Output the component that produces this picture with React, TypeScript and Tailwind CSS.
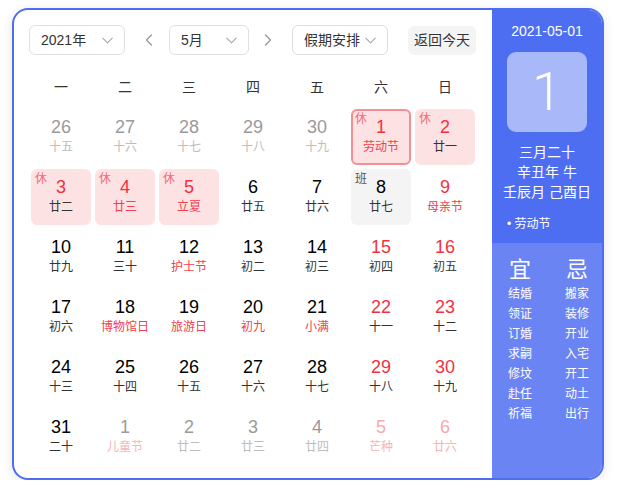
import React from 'react';
import { ChevronDown, ChevronLeft, ChevronRight } from 'lucide-react';

type Day = {
  n: number;
  lunar: string;
  other?: boolean;
  red?: boolean; // number in red
  lunarRed?: boolean;
  tag?: '休' | '班';
  selected?: boolean;
};

const days: Day[] = [
  { n: 26, lunar: '十五', other: true },
  { n: 27, lunar: '十六', other: true },
  { n: 28, lunar: '十七', other: true },
  { n: 29, lunar: '十八', other: true },
  { n: 30, lunar: '十九', other: true },
  { n: 1, lunar: '劳动节', red: true, lunarRed: true, tag: '休', selected: true },
  { n: 2, lunar: '廿一', red: true, tag: '休' },
  { n: 3, lunar: '廿二', red: true, tag: '休' },
  { n: 4, lunar: '廿三', red: true, lunarRed: true, tag: '休' },
  { n: 5, lunar: '立夏', red: true, lunarRed: true, tag: '休' },
  { n: 6, lunar: '廿五' },
  { n: 7, lunar: '廿六' },
  { n: 8, lunar: '廿七', tag: '班' },
  { n: 9, lunar: '母亲节', red: true, lunarRed: true },
  { n: 10, lunar: '廿九' },
  { n: 11, lunar: '三十' },
  { n: 12, lunar: '护士节', lunarRed: true },
  { n: 13, lunar: '初二' },
  { n: 14, lunar: '初三' },
  { n: 15, lunar: '初四', red: true },
  { n: 16, lunar: '初五', red: true },
  { n: 17, lunar: '初六' },
  { n: 18, lunar: '博物馆日', lunarRed: true },
  { n: 19, lunar: '旅游日', lunarRed: true },
  { n: 20, lunar: '初九', lunarRed: true },
  { n: 21, lunar: '小满', lunarRed: true },
  { n: 22, lunar: '十一', red: true },
  { n: 23, lunar: '十二', red: true },
  { n: 24, lunar: '十三' },
  { n: 25, lunar: '十四' },
  { n: 26, lunar: '十五' },
  { n: 27, lunar: '十六' },
  { n: 28, lunar: '十七' },
  { n: 29, lunar: '十八', red: true },
  { n: 30, lunar: '十九', red: true },
  { n: 31, lunar: '二十' },
  { n: 1, lunar: '儿童节', other: true, lunarRed: true },
  { n: 2, lunar: '廿二', other: true },
  { n: 3, lunar: '廿三', other: true },
  { n: 4, lunar: '廿四', other: true },
  { n: 5, lunar: '芒种', other: true, red: true, lunarRed: true },
  { n: 6, lunar: '廿六', other: true, red: true, lunarRed: true },
];

const weekdays = ['一', '二', '三', '四', '五', '六', '日'];
const yi = ['结婚', '领证', '订婚', '求嗣', '修坟', '赴任', '祈福'];
const ji = ['搬家', '装修', '开业', '入宅', '开工', '动土', '出行'];

const Select: React.FC<{ label: string; width: string }> = ({ label, width }) => (
  <div
    className={`${width} h-[30px] flex items-center justify-between pl-[11px] pr-[7px] border border-[#dcdfe6] rounded-[6px] text-[14px] text-[#333] whitespace-nowrap`}
  >
    <span>{label}</span>
    <ChevronDown className="shrink-0 w-[19px] h-[19px] text-[#a8abb2]" strokeWidth={1.5} />
  </div>
);

const DayCell: React.FC<{ d: Day }> = ({ d }) => {
  let bg = '';
  if (d.tag === '休') bg = 'bg-[#fde2e4]';
  if (d.tag === '班') bg = 'bg-[#f4f4f4]';
  const border = d.selected ? 'border-2 border-[#f29096]' : '';

  let numColor = d.red ? 'text-[#f5303e]' : 'text-black';
  let lunarColor = d.lunarRed ? 'text-[#f2404c]' : 'text-[#333]';
  if (d.other) {
    numColor = d.red ? 'text-[#f8a9ae]' : 'text-[#9a9a9a]';
    lunarColor = d.lunarRed ? 'text-[#f8b4b8]' : 'text-[#bdbdbd]';
  }

  return (
    <div className={`relative h-[56px] rounded-[6px] flex flex-col items-center ${bg} ${border} ${d.selected ? 'pt-[6px]' : 'pt-[8px]'}`}>
      {d.tag && (
        <span
          className={`absolute ${d.selected ? 'left-[2px] top-[1px]' : 'left-[4px] top-[3px]'} text-[12px] leading-[14px] ${
            d.tag === '休' ? 'text-[#f36b73]' : 'text-[#555]'
          }`}
        >
          {d.tag}
        </span>
      )}
      <span className={`text-[18px] leading-[21px] ${numColor}`}>{d.n}</span>
      <span className={`text-[12px] leading-[18px] ${lunarColor}`}>{d.lunar}</span>
    </div>
  );
};

export default function App() {
  return (
    <div
      className="pt-[8px] pl-[12px]"
      style={{ fontFamily: '"Liberation Sans", "Noto Sans CJK SC", sans-serif' }}
    >
      <div className="w-[592px] h-[472px] flex border-2 border-[#4e6ef2] rounded-[16px] overflow-hidden bg-white shadow-[0_2px_12px_rgba(0,0,0,0.1)]">
        {/* Calendar */}
        <div className="flex-1 pt-[15px] pl-[15px]">
          <div className="flex items-center">
            <Select label="2021年" width="w-[96px]" />
            <ChevronLeft className="shrink-0 ml-[14px] w-[20px] h-[20px] text-[#999]" strokeWidth={1.6} />
            <div className="ml-[10px]">
              <Select label="5月" width="w-[80px]" />
            </div>
            <ChevronRight className="shrink-0 ml-[9px] w-[20px] h-[20px] text-[#999]" strokeWidth={1.6} />
            <div className="ml-[14px]">
              <Select label="假期安排" width="w-[96px]" />
            </div>
            <div className="shrink-0 ml-[20px] w-[68px] h-[29px] flex items-center justify-center rounded-[6px] bg-[#f4f4f5] text-[14px] text-[#333] whitespace-nowrap">
              返回今天
            </div>
          </div>

          <div className="ml-[2px] w-[444px] mt-[17px] h-[30px] grid grid-cols-7 gap-x-1 items-center text-center text-[14px] text-[#333]">
            {weekdays.map((w) => (
              <span key={w}>{w}</span>
            ))}
          </div>

          <div className="ml-[2px] w-[444px] mt-[7px] grid grid-cols-7 gap-1">
            {days.map((d, i) => (
              <DayCell key={i} d={d} />
            ))}
          </div>
        </div>

        {/* Side panel */}
        <div className="w-[110px] flex flex-col text-white">
          <div className="bg-[#4e6ef2] h-[233px] flex flex-col items-center pt-[11px]">
            <div className="text-[14px] leading-[20px]">2021-05-01</div>
            <div
              className="mt-[11px] w-[80px] h-[80px] rounded-[9px] bg-[#a9b8f8] flex items-center justify-center text-[54px] font-light leading-none"
              style={{ fontFamily: 'Roboto, "Liberation Sans", sans-serif' }}
            >
              1
            </div>
            <div className="mt-[10px] text-[14px] leading-[20px] text-center">
              <div>三月二十</div>
              <div>辛丑年 牛</div>
              <div>壬辰月 己酉日</div>
            </div>
            <div className="self-start ml-[15px] mt-[14px] text-[12px] leading-[16px]">• 劳动节</div>
          </div>
          <div className="flex-1 bg-[#6a84f4] pt-[13px] pl-[16px] flex gap-[33px]">
            <div className="flex flex-col items-center">
              <span className="text-[22px] leading-[28px]">宜</span>
              {yi.map((t) => (
                <span key={t} className="text-[12px] leading-[20px]">{t}</span>
              ))}
            </div>
            <div className="flex flex-col items-center">
              <span className="text-[22px] leading-[28px]">忌</span>
              {ji.map((t) => (
                <span key={t} className="text-[12px] leading-[20px]">{t}</span>
              ))}
            </div>
          </div>
        </div>
      </div>
    </div>
  );
}
